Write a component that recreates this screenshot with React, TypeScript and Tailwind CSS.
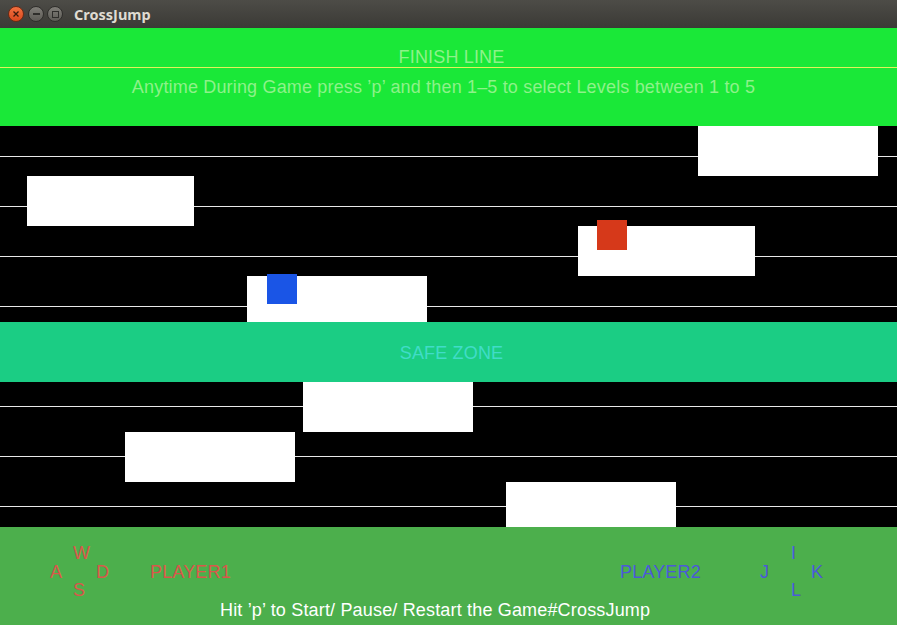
import React from "react";

const upperRects = [
  { x: 698, y: 0, w: 180, h: 50 },
  { x: 27, y: 50, w: 167, h: 50 },
  { x: 578, y: 100, w: 177, h: 50 },
  { x: 247, y: 150, w: 180, h: 46 },
];
const upperLines = [30, 80, 130, 180];
const lowerRects = [
  { x: 303, y: 0, w: 170, h: 50 },
  { x: 125, y: 50, w: 170, h: 50 },
  { x: 506, y: 100, w: 170, h: 45 },
];
const lowerLines = [24, 74, 124];

function Lane({
  h,
  lines,
  rects,
  children,
}: {
  h: string;
  lines: number[];
  rects: { x: number; y: number; w: number; h: number }[];
  children?: React.ReactNode;
}) {
  return (
    <div className={`relative w-full bg-black overflow-hidden ${h}`}>
      {lines.map((y) => (
        <div
          key={y}
          className="absolute left-0 right-0 h-px bg-[#e8e8e8]"
          style={{ top: y }}
        />
      ))}
      {rects.map((r, i) => (
        <div
          key={i}
          className="absolute bg-white"
          style={{ left: r.x, top: r.y, width: r.w, height: r.h }}
        />
      ))}
      {children}
    </div>
  );
}

export default function App() {
  return (
    <div
      className="w-[897px] h-[625px] flex flex-col overflow-hidden text-[18px] leading-[20px] tracking-[0.17px]"
      style={{ fontFamily: '"Liberation Sans", Arial, sans-serif' }}
    >
      {/* Title bar */}
      <div className="h-[28px] flex items-center bg-gradient-to-b from-[#4d4c47] to-[#3b3a36] pl-[8px] tracking-normal">
        <div className="w-[16px] h-[16px] rounded-full bg-gradient-to-b from-[#f2703f] to-[#d9481c] border border-[#6b2a14] flex items-center justify-center">
          <svg width="8" height="8" viewBox="0 0 8 8">
            <path d="M1.5 1.5 L6.5 6.5 M6.5 1.5 L1.5 6.5" stroke="#3a1a0c" strokeWidth="1.3" />
          </svg>
        </div>
        <div className="ml-[4px] w-[16px] h-[16px] rounded-full bg-gradient-to-b from-[#807e78] to-[#5d5b56] border border-[#2f2e2b] flex items-center justify-center">
          <div className="w-[7px] h-[2px] bg-[#2f2e2b]" />
        </div>
        <div className="ml-[3px] w-[16px] h-[16px] rounded-full bg-gradient-to-b from-[#807e78] to-[#5d5b56] border border-[#2f2e2b] flex items-center justify-center">
          <div className="w-[7px] h-[7px] border-[1.5px] border-[#2f2e2b]" />
        </div>
        <div
          className="ml-[11px] text-[14.5px] font-bold text-[#dfdbd2] leading-none"
          style={{ fontFamily: '"Noto Sans", "DejaVu Sans", sans-serif' }}
        >
          CrossJump
        </div>
      </div>

      {/* Finish line band */}
      <div className="h-[98px] shrink-0 bg-[#1ae838] flex flex-col items-center">
        <div className="mt-[19px] h-[20px] text-[#8ef28a] pl-[6px]">FINISH LINE</div>
        <div className="h-px w-full bg-[#e2f25a]" />
        <div className="mt-[9px] h-[20px] text-[#8ef28a] pr-[10px]">
          Anytime During Game press ’p’ and then 1–5 to select Levels between 1 to 5
        </div>
      </div>

      {/* Upper lanes */}
      <Lane h="h-[196px] shrink-0" lines={upperLines} rects={upperRects}>
        <div className="absolute bg-[#d6391a]" style={{ left: 597, top: 94, width: 30, height: 30 }} />
        <div className="absolute bg-[#1a55e6]" style={{ left: 267, top: 148, width: 30, height: 30 }} />
      </Lane>

      {/* Safe zone */}
      <div className="h-[60px] shrink-0 bg-[#1bcd84] flex items-center justify-center pt-[2px]">
        <span className="text-[#40dcc8] pl-[6px]">SAFE ZONE</span>
      </div>

      {/* Lower lanes */}
      <Lane h="h-[145px] shrink-0" lines={lowerLines} rects={lowerRects} />

      {/* Bottom panel */}
      <div className="h-[98px] shrink-0 bg-[#4caf4c] flex flex-col">
        <div className="mt-[17px] flex items-center">
          <div className="ml-[50px] grid grid-cols-[23px_23px_23px] grid-rows-[19px_18px_19px] text-[#d9574a] leading-[18px]">
            <span className="col-start-2 row-start-1">W</span>
            <span className="col-start-1 row-start-2">A</span>
            <span className="col-start-3 row-start-2">D</span>
            <span className="col-start-2 row-start-3">S</span>
          </div>
          <div className="ml-[31px] w-[470px] text-[#d9574a]">PLAYER1</div>
          <div className="w-[140px] text-[#4b5ad8]">PLAYER2</div>
          <div className="grid grid-cols-[31px_20px_20px] grid-rows-[19px_18px_19px] text-[#4b5ad8] leading-[18px]">
            <span className="col-start-2 row-start-1">I</span>
            <span className="col-start-1 row-start-2">J</span>
            <span className="col-start-3 row-start-2">K</span>
            <span className="col-start-2 row-start-3">L</span>
          </div>
        </div>
        <div className="h-[20px] pl-[220px] text-white">
          Hit ’p’ to Start/ Pause/ Restart the Game#CrossJump
        </div>
      </div>
    </div>
  );
}
